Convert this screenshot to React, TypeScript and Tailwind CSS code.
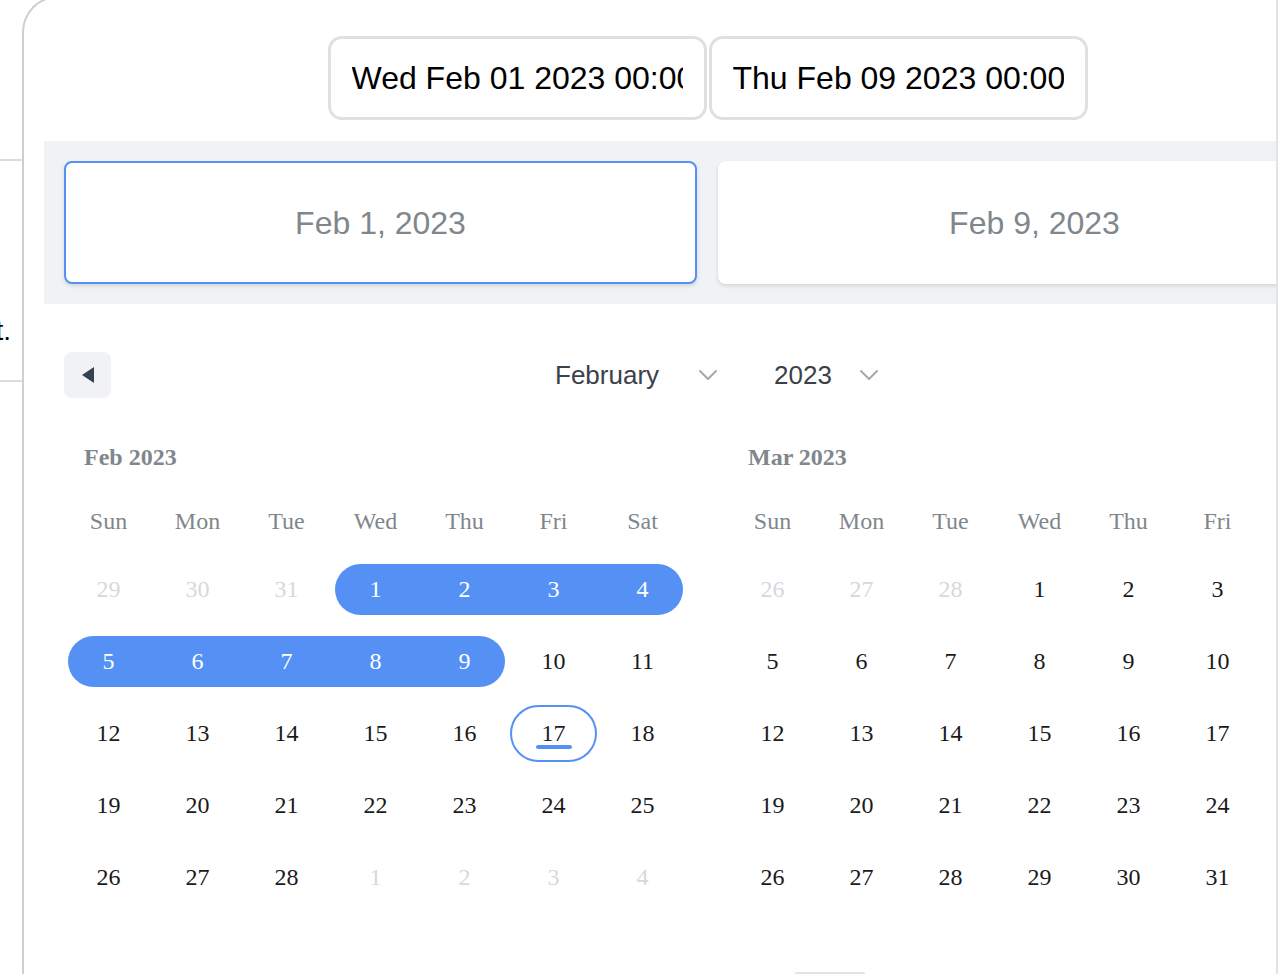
import React from "react";

const SANS = "font-['Liberation_Sans',Arial,sans-serif]";
const SERIF = "font-['Liberation_Serif','Times_New_Roman',serif]";

type Day = { n: number; muted?: boolean; start?: boolean; end?: boolean; inRange?: boolean; today?: boolean };

const WEEKDAYS = ["Sun", "Mon", "Tue", "Wed", "Thu", "Fri", "Sat"];

function buildMonth(lead: number[], count: number, trail: number[]): Day[][] {
  const days: Day[] = [
    ...lead.map((n) => ({ n, muted: true })),
    ...Array.from({ length: count }, (_, i) => ({ n: i + 1 })),
    ...trail.map((n) => ({ n, muted: true })),
  ];
  const rows: Day[][] = [];
  for (let i = 0; i < days.length; i += 7) rows.push(days.slice(i, i + 7));
  return rows;
}

const feb = buildMonth([29, 30, 31], 28, [1, 2, 3, 4]).map((row) =>
  row.map((d, c) => {
    if (d.muted) return d;
    const inRange = d.n >= 1 && d.n <= 9;
    return {
      ...d,
      inRange,
      start: inRange && (d.n === 1 || c === 0),
      end: inRange && (d.n === 9 || c === 6),
      today: d.n === 17,
    };
  })
);

const mar = buildMonth([26, 27, 28], 31, [1]).slice(0, 5);

function DayCell({ d }: { d: Day }) {
  if (d.inRange) {
    // inset the pill ends but keep the number on the column centre
    const shape =
      d.start && d.end
        ? "mx-[4px] rounded-full"
        : d.start
        ? "ml-[4px] pr-[4px] rounded-l-full"
        : d.end
        ? "mr-[4px] pl-[4px] rounded-r-full"
        : "";
    return (
      <div className="h-[72px] flex items-center">
        <div className={`h-[51px] flex-1 bg-[#5591f5] text-white flex items-center justify-center ${shape}`}>
          {d.n}
        </div>
      </div>
    );
  }
  if (d.today) {
    return (
      <div className="h-[72px] flex items-center justify-center">
        <div className="relative w-[87px] h-[57px] rounded-full border-2 border-[#5591f5] flex items-center justify-center text-[#1f2328]">
          {d.n}
          <span className="absolute left-[24px] bottom-[11px] w-[36px] h-[4px] rounded-full bg-[#5591f5]" />
        </div>
      </div>
    );
  }
  return (
    <div className={`h-[72px] flex items-center justify-center ${d.muted ? "text-[#d5d9de]" : "text-[#1a1a1a]"}`}>
      {d.n}
    </div>
  );
}

function Month({ title, rows }: { title: string; rows: Day[][] }) {
  return (
    <div className={`w-[623px] shrink-0 ${SERIF}`}>
      <div className="pl-[20px] mt-[45px] text-[24px] leading-[28px] font-bold text-[#80878c]">{title}</div>
      <div className="grid grid-cols-7 mt-[18px] text-[24px] text-[#80878c]">
        {WEEKDAYS.map((w) => (
          <div key={w} className="h-[64px] flex items-center justify-center">
            {w}
          </div>
        ))}
      </div>
      <div className="grid grid-cols-7 text-[24px]">
        {rows.flat().map((d, i) => (
          <DayCell key={i} d={d} />
        ))}
      </div>
    </div>
  );
}

function Chevron() {
  return (
    <svg width="20" height="12" viewBox="0 0 20 12" className="block">
      <polyline points="2,2 10,10 18,2" fill="none" stroke="#a3a9b0" strokeWidth="2" strokeLinecap="round" strokeLinejoin="round" />
    </svg>
  );
}

export default function App() {
  return (
    <div className={`flex w-full h-[974px] overflow-hidden bg-white ${SANS}`}>
      {/* page behind the dialog */}
      <div className="w-[22px] shrink-0 flex flex-col">
        <div className="h-[159px]" />
        <div className="h-[2px] bg-[#dcdcdc]" />
        <div className="h-[154px]" />
        <div className="flex justify-end pr-[11px] overflow-hidden whitespace-nowrap text-[28px] leading-[32px] text-black">
          next.
        </div>
        <div className="h-[33px]" />
        <div className="h-[2px] bg-[#dcdcdc]" />
      </div>

      <div className="flex-1 overflow-hidden">
        <div className="w-[1380px] mt-[-4px] border-l-2 border-t-2 border-[#cfcfcf] rounded-tl-[36px] pl-[20px] pt-[38px] pb-[40px]">
          <div className="w-[1327px]">
            {/* raw inputs */}
            <div className="flex justify-center gap-[2px]">
              <input
                readOnly
                value="Wed Feb 01 2023 00:00:00 GMT+0000"
                className="w-[379px] h-[84px] px-[21px] border-[3px] border-[#e0e0e0] rounded-[14px] text-[32px] text-black outline-none bg-white"
              />
              <input
                readOnly
                value="Thu Feb 09 2023 00:00:00 GMT+0000"
                className="w-[379px] h-[84px] px-[21px] border-[3px] border-[#e0e0e0] rounded-[14px] text-[32px] text-black outline-none bg-white"
              />
            </div>

            {/* selected range fields */}
            <div className="mt-[21px] bg-[#f0f2f5] p-[20px] flex gap-[21px]">
              <div className="w-[633px] h-[123px] rounded-[8px] bg-white border-2 border-[#5591f5] shadow-[0_2px_4px_rgba(0,0,0,0.12)] flex items-center justify-center text-[32px] text-[#80878c]">
                Feb 1, 2023
              </div>
              <div className="w-[633px] h-[123px] rounded-[8px] bg-white shadow-[0_2px_4px_rgba(0,0,0,0.12)] flex items-center justify-center text-[32px] text-[#80878c]">
                Feb 9, 2023
              </div>
            </div>

            {/* navigation */}
            <div className="mt-[48px] px-[20px] flex items-center">
              <button className="w-[47px] h-[46px] rounded-[8px] bg-[#f0f2f5] flex items-center justify-center">
                <svg width="12" height="16" viewBox="0 0 12 16">
                  <polygon points="12,0 12,16 0,8" fill="#364152" />
                </svg>
              </button>
              <div className="ml-[444px] flex items-center text-[26px] text-[#3b4148]">
                <span>February</span>
                <span className="ml-[39px]">
                  <Chevron />
                </span>
                <span className="ml-[56px]">2023</span>
                <span className="ml-[27px]">
                  <Chevron />
                </span>
              </div>
            </div>

            {/* months */}
            <div className="flex gap-[41px] pl-[20px]">
              <Month title="Feb 2023" rows={feb} />
              <Month title="Mar 2023" rows={mar} />
            </div>

            <div className="mt-[59px] ml-[751px] w-[70px] h-[3px] rounded-full bg-[#e3e3e3]" />
          </div>
        </div>
      </div>

      <div className="w-[2px] shrink-0 bg-[#e3e3e3]" />
      <div className="w-[2px] shrink-0 bg-white" />
    </div>
  );
}
